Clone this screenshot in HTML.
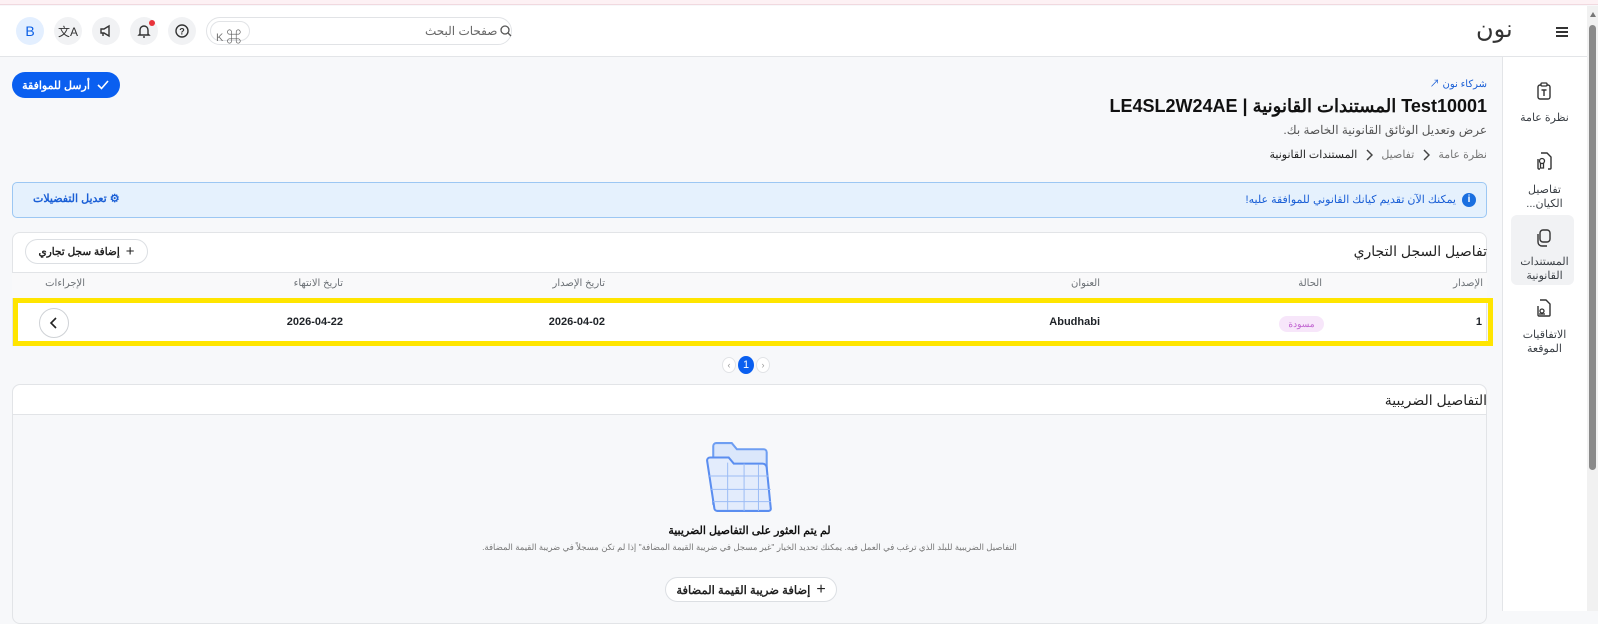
<!DOCTYPE html>
<html><head><meta charset="utf-8"><style>
*{box-sizing:border-box;margin:0;padding:0}
body{width:1598px;height:611px;overflow:hidden;background:#f7f8fa;font-family:"Liberation Sans","Noto Sans CJK SC",sans-serif;position:relative;color:#1f2328}
.a{position:absolute}
.r{direction:rtl;white-space:nowrap}
.circ{position:absolute;width:28px;height:28px;border-radius:50%;background:#f1f2f4;display:flex;align-items:center;justify-content:center}
.sl{position:absolute;left:1502px;width:85px;text-align:center;font-size:11px;color:#3a3f45;line-height:14px;direction:rtl}
.th{position:absolute;top:278px;font-size:10px;color:#6b7075;direction:rtl}
.td{position:absolute;top:316px;font-size:11px;font-weight:bold;direction:rtl}
.btn{position:absolute;border:1px solid #dcdfe3;border-radius:13px;background:#fff;display:flex;align-items:center;justify-content:center;gap:6px;direction:rtl;white-space:nowrap;font-weight:bold;color:#222}
</style></head><body>
<div class="a" style="left:0;top:0;width:1598px;height:5px;background:#fdf1f4;border-bottom:1px solid #f1d9df"></div>
<div class="a" style="left:0;top:6px;width:1587px;height:51px;background:#fff;border-bottom:1px solid #e3e5e8"></div>
<div class="a" style="left:1587px;top:6px;width:11px;height:605px;background:#f1f1f1"></div>
<div class="a" style="left:1589px;top:25px;width:7px;height:445px;background:#8a8a8a;border-radius:4px"></div>
<div class="a" style="left:1590px;top:12px;width:0;height:0;border-left:3px solid transparent;border-right:3px solid transparent;border-bottom:5px solid #777"></div>
<!-- header right -->
<div class="a" style="left:1556px;top:27px;width:12px;height:2px;background:#333;box-shadow:0 4px 0 #333,0 8px 0 #333"></div>
<div class="a r" style="left:1476px;top:15px;font-size:24px;color:#333;letter-spacing:1px">نون</div>
<!-- search -->
<div class="a" style="left:206px;top:17px;width:306px;height:28px;border:1px solid #e1e3e6;border-radius:14px;background:#fff"></div>
<div class="a" style="left:210px;top:21px;width:40px;height:20px;border:1px solid #e1e3e6;border-radius:10px;font-size:11px;color:#777;padding:3px 0 0 5px">K <span style="font-size:15px;color:#555;position:relative;top:1px">⌘</span></div>
<div class="a r" style="left:425px;top:24px;font-size:12px;color:#666">صفحات البحث</div>
<svg class="a" style="left:500px;top:25px" width="12" height="12" viewBox="0 0 12 12"><circle cx="5" cy="5" r="4" fill="none" stroke="#555" stroke-width="1.3"/><path d="M8 8l3 3" stroke="#555" stroke-width="1.3"/></svg>
<div class="circ" style="left:16px;top:17px;background:#e3efff;color:#0a5fe6;font-size:14px">B</div>
<div class="circ" style="left:54px;top:17px;font-size:12px;color:#333">文A</div>
<div class="circ" style="left:92px;top:17px"><svg width="14" height="14" viewBox="0 0 14 14"><path d="M2 5h3l5-3v10l-5-3H2z" fill="none" stroke="#333" stroke-width="1.4"/><path d="M4 9v3" stroke="#333" stroke-width="1.4"/></svg></div>
<div class="circ" style="left:130px;top:17px"><svg width="14" height="14" viewBox="0 0 14 14"><path d="M3 10V6a4 4 0 0 1 8 0v4l1 1H2z" fill="none" stroke="#333" stroke-width="1.4"/><path d="M6 13h2" stroke="#333" stroke-width="1.4"/></svg></div>
<div class="a" style="left:149px;top:20px;width:6px;height:6px;border-radius:50%;background:#e8333a"></div>
<div class="circ" style="left:168px;top:17px"><svg width="14" height="14" viewBox="0 0 14 14"><circle cx="7" cy="7" r="6" fill="none" stroke="#333" stroke-width="1.4"/><text x="7" y="10.5" font-size="9" text-anchor="middle" fill="#333" font-family="Liberation Sans" font-weight="bold">?</text></svg></div>
<!-- sidebar -->
<div class="a" style="left:1502px;top:57px;width:85px;height:554px;background:#fff;border-left:1px solid #e3e5e8"></div>
<svg class="a" style="left:1537px;top:82px" width="14" height="18" viewBox="0 0 14 18"><rect x="1" y="3" width="12" height="14" rx="2" fill="none" stroke="#333" stroke-width="1.4"/><rect x="4" y="1" width="6" height="3" rx="1" fill="#fff" stroke="#333" stroke-width="1.3"/><path d="M4.5 8h5M7 8v6" stroke="#333" stroke-width="1.4"/></svg>
<div class="sl" style="top:111px">نظرة عامة</div>
<svg class="a" style="left:1536px;top:152px" width="16" height="18" viewBox="0 0 16 18"><path d="M5 1h6l4 4v11a1 1 0 0 1-1 1h-2M4 17H3a1 1 0 0 1-1-1V7" fill="none" stroke="#333" stroke-width="1.4"/><circle cx="6" cy="9" r="2.5" fill="none" stroke="#333" stroke-width="1.3"/><path d="M4.5 11v5h3v-5" fill="none" stroke="#333" stroke-width="1.3"/></svg>
<div class="sl" style="top:183px">تفاصيل<br>الكيان...</div>
<div class="a" style="left:1511px;top:215px;width:63px;height:70px;background:#f1f2f4;border-radius:6px"></div>
<svg class="a" style="left:1536px;top:229px" width="16" height="18" viewBox="0 0 16 18"><rect x="4" y="1" width="10" height="12" rx="3" fill="none" stroke="#333" stroke-width="1.4"/><path d="M2 5v8a4 4 0 0 0 4 4h5" fill="none" stroke="#333" stroke-width="1.4"/></svg>
<div class="sl" style="top:255px">المستندات<br>القانونية</div>
<svg class="a" style="left:1536px;top:299px" width="16" height="18" viewBox="0 0 16 18"><path d="M4 1h6l4 4v11a1 1 0 0 1-1 1H3a1 1 0 0 1-1-1V7" fill="none" stroke="#333" stroke-width="1.4"/><circle cx="6" cy="12" r="2" fill="none" stroke="#333" stroke-width="1.3"/><path d="M3 15h6" stroke="#333" stroke-width="1.3"/></svg>
<div class="sl" style="top:328px">الاتفاقيات<br>الموقعة</div>
<!-- page header -->
<div class="btn" style="left:12px;top:72px;width:108px;height:26px;background:#0a5ff0;border:none;color:#fff;font-size:11px">
<svg width="14" height="14" viewBox="0 0 14 14"><path d="M2 7l3.5 3.5L12 3" fill="none" stroke="#fff" stroke-width="1.6"/></svg><span>أرسل للموافقة</span></div>
<div class="a r" style="right:111px;top:75px;font-size:10px;color:#1a5fd6">شركاء نون <span style="font-size:10px">↗</span></div>
<div class="a r" style="right:111px;top:96px;font-size:18px;font-weight:bold;color:#111">Test10001 المستندات القانونية | LE4SL2W24AE</div>
<div class="a r" style="right:111px;top:123px;font-size:12px;color:#555">عرض وتعديل الوثائق القانونية الخاصة بك.</div>
<div class="a r" style="right:111px;top:148px;font-size:11px;color:#777;display:flex;align-items:center;gap:8px">
<span>نظرة عامة</span><svg width="8" height="12" viewBox="0 0 8 12"><path d="M2 1l5 5-5 5" fill="none" stroke="#444" stroke-width="1.5"/></svg>
<span>تفاصيل</span><svg width="8" height="12" viewBox="0 0 8 12"><path d="M2 1l5 5-5 5" fill="none" stroke="#444" stroke-width="1.5"/></svg>
<span style="color:#222">المستندات القانونية</span></div>
<!-- banner -->
<div class="a" style="left:12px;top:182px;width:1475px;height:36px;background:#e5f1fd;border:1px solid #9cc7f3;border-radius:5px"></div>
<div class="a" style="left:1462px;top:193px;width:14px;height:14px;border-radius:50%;background:#1a6fe0;color:#fff;font-size:10px;text-align:center;line-height:14px;font-weight:bold">i</div>
<div class="a r" style="right:142px;top:193px;font-size:11px;color:#1a5fd6">يمكنك الآن تقديم كيانك القانوني للموافقة عليه!</div>
<div class="a r" style="left:33px;top:192px;font-size:11px;color:#1a5fd6;font-weight:bold">⚙ تعديل التفضيلات</div>
<!-- card1 -->
<div class="a" style="left:12px;top:232px;width:1475px;height:114px;background:#fff;border:1px solid #e2e4e7;border-radius:8px 8px 0 0"></div>
<div class="a" style="left:12px;top:272px;width:1475px;height:26px;background:#f9f9fa;border-top:1px solid #e2e4e7"></div>
<div class="a r" style="right:111px;top:243px;font-size:14px;color:#222">تفاصيل السجل التجاري</div>
<div class="btn" style="left:25px;top:239px;width:123px;height:25px;font-size:10.5px"><span style="font-size:15px;font-weight:normal">+</span><span>إضافة سجل تجاري</span></div>
<div class="th" style="right:115px">الإصدار</div>
<div class="th" style="right:276px">الحالة</div>
<div class="th" style="right:498px">العنوان</div>
<div class="th" style="right:993px">تاريخ الإصدار</div>
<div class="th" style="right:1255px">تاريخ الانتهاء</div>
<div class="th" style="right:1513px">الإجراءات</div>
<div class="a" style="left:13px;top:298px;width:1480px;height:48px;border:5px solid #ffe500"></div>
<div class="td" style="right:116px">1</div>
<div class="a r" style="left:1279px;top:316px;width:45px;height:16px;border-radius:8px;background:#f7e6fa;color:#c062d0;font-size:9px;text-align:center;line-height:16px">مسودة</div>
<div class="td" style="right:498px;font-family:'Liberation Sans',sans-serif">Abudhabi</div>
<div class="td" style="right:993px">2026-04-02</div>
<div class="td" style="right:1255px">2026-04-22</div>
<div class="a" style="left:39px;top:308px;width:30px;height:30px;border-radius:50%;border:1px solid #cfd2d6;background:#fff"></div>
<svg class="a" style="left:48px;top:316px" width="12" height="14" viewBox="0 0 12 14"><path d="M8 2L3 7l5 5" fill="none" stroke="#222" stroke-width="1.6"/></svg>
<!-- pagination -->
<div class="a" style="left:722px;top:357px;width:14px;height:16px;border:1px solid #e1e3e6;border-radius:50%;background:#fff;font-size:9px;color:#999;text-align:center;line-height:14px">‹</div>
<div class="a" style="left:738px;top:356px;width:16px;height:18px;border-radius:50%;background:#0a5ff0;color:#fff;font-size:11px;text-align:center;line-height:18px">1</div>
<div class="a" style="left:756px;top:357px;width:14px;height:16px;border:1px solid #e1e3e6;border-radius:50%;background:#fff;font-size:9px;color:#999;text-align:center;line-height:14px">›</div>
<!-- card2 -->
<div class="a" style="left:12px;top:384px;width:1475px;height:240px;background:#f7f8fa;border:1px solid #e2e4e7;border-radius:8px"></div>
<div class="a" style="left:13px;top:385px;width:1473px;height:30px;background:#fff;border-bottom:1px solid #e2e4e7;border-radius:8px 8px 0 0"></div>
<div class="a r" style="right:111px;top:392px;font-size:14px;color:#222">التفاصيل الضريبية</div>
<svg class="a" style="left:705px;top:440px" width="72" height="74" viewBox="0 0 70 72">
<path d="M8 6a3 3 0 0 1 3-3h15l5 6h26a3 3 0 0 1 3 3v50H8z" fill="#dbe7fb" stroke="#6e9ef2" stroke-width="2"/>
<path d="M2 20a3 3 0 0 1 3-3h18l5 6h28a4 4 0 0 1 4 4l4 40a2 2 0 0 1-2 2H12a3 3 0 0 1-3-3z" fill="#e3ecfc" stroke="#5b8ef0" stroke-width="2"/>
<g stroke="#9dbdf5" stroke-width="1"><path d="M4 35h58M6 48h58M8 60h56M22 22v46M38 23v46M52 24v45"/></g>
</svg>
<div class="a r" style="left:12px;width:1475px;text-align:center;top:524px;font-size:11px;font-weight:bold;color:#111">لم يتم العثور على التفاصيل الضريبية</div>
<div class="a r" style="left:12px;width:1475px;text-align:center;top:542px;font-size:8.5px;color:#777">التفاصيل الضريبية للبلد الذي ترغب في العمل فيه. يمكنك تحديد الخيار "غير مسجل في ضريبة القيمة المضافة" إذا لم تكن مسجلاً في ضريبة القيمة المضافة.</div>
<div class="btn" style="left:665px;top:577px;width:172px;height:25px;font-size:11.5px"><span style="font-size:16px;font-weight:normal">+</span><span>إضافة ضريبة القيمة المضافة</span></div>
</body></html>
